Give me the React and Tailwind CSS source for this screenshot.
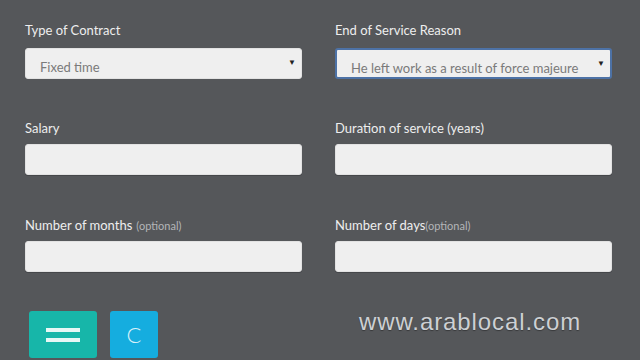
import React from 'react';

const FONT = { fontFamily: 'Lato, "Open Sans", sans-serif' };

const Label = ({ text, optional, tight, className = '' }) => (
  <div className={`text-[13px] leading-[16px] text-[#eeeeee] ${className}`}>
    {text}
    {optional && (
      <span className={`text-[11px] text-[#b3b5b8] ${tight ? '' : 'ml-[4px]'}`}>(optional)</span>
    )}
  </div>
);

const SelectBox = ({ value, focused }) => (
  <div
    className={`relative h-[31px] rounded-[3px] bg-[#efefef] pl-[14px] pt-[11px] text-[13px] leading-[14px] text-[#7a7a7a] ${
      focused ? 'border-2 border-[#4d72a6] pl-[13px] pt-[10px]' : 'border border-[#e2e2e2]'
    }`}
  >
    {value}
    <span className="absolute right-[5px] top-[6px] text-[8px] text-[#222]">▼</span>
  </div>
);

const TextBox = () => (
  <div className="h-[31px] rounded-[3px] border border-[#e2e2e2] bg-[#efefef] shadow-[0_1px_0_#45474a]" />
);

export default function App() {
  return (
    <div className="relative h-[360px] w-[640px] overflow-hidden bg-[#55575a]" style={FONT}>
      <div className="grid grid-cols-2 gap-x-[33px] pl-[25px] pr-[28px] pt-[22px]">
        <div>
          <Label text="Type of Contract" className="mb-[10px]" />
          <SelectBox value="Fixed time" />
        </div>
        <div>
          <Label text="End of Service Reason" className="mb-[10px]" />
          <SelectBox value="He left work as a result of force majeure" focused />
        </div>

        <div className="mt-[41px]">
          <Label text="Salary" className="mb-[8px]" />
          <TextBox />
        </div>
        <div className="mt-[41px]">
          <Label text="Duration of service (years)" className="mb-[8px]" />
          <TextBox />
        </div>

        <div className="mt-[42px]">
          <Label text="Number of months" optional className="mb-[7px]" />
          <TextBox />
        </div>
        <div className="mt-[42px]">
          <Label text="Number of days" optional tight className="mb-[7px]" />
          <TextBox />
        </div>
      </div>

      <div className="ml-[29px] mt-[39px] flex gap-[13px]">
        <button className="flex h-[47px] w-[68px] flex-col items-center justify-center gap-[6px] rounded-[3px] bg-[#17b6a9]">
          <span className="block h-[4px] w-[34px] bg-[#e6f7f5]" />
          <span className="block h-[4px] w-[34px] bg-[#e6f7f5]" />
        </button>
        <button className="flex h-[47px] w-[48px] items-center justify-center rounded-[3px] bg-[#15addf] text-[22px] font-light text-[#d9f1fa]">
          C
        </button>
      </div>

      <div
        className="absolute left-[359px] top-[310px] text-[24px] leading-[24px] tracking-[0.9px] text-[#cdd0d3] [text-shadow:0_1px_1px_rgba(0,0,0,0.35)]"
        style={{ fontFamily: '"Liberation Sans", Arial, sans-serif' }}
      >
        www.arablocal.com
      </div>
    </div>
  );
}
